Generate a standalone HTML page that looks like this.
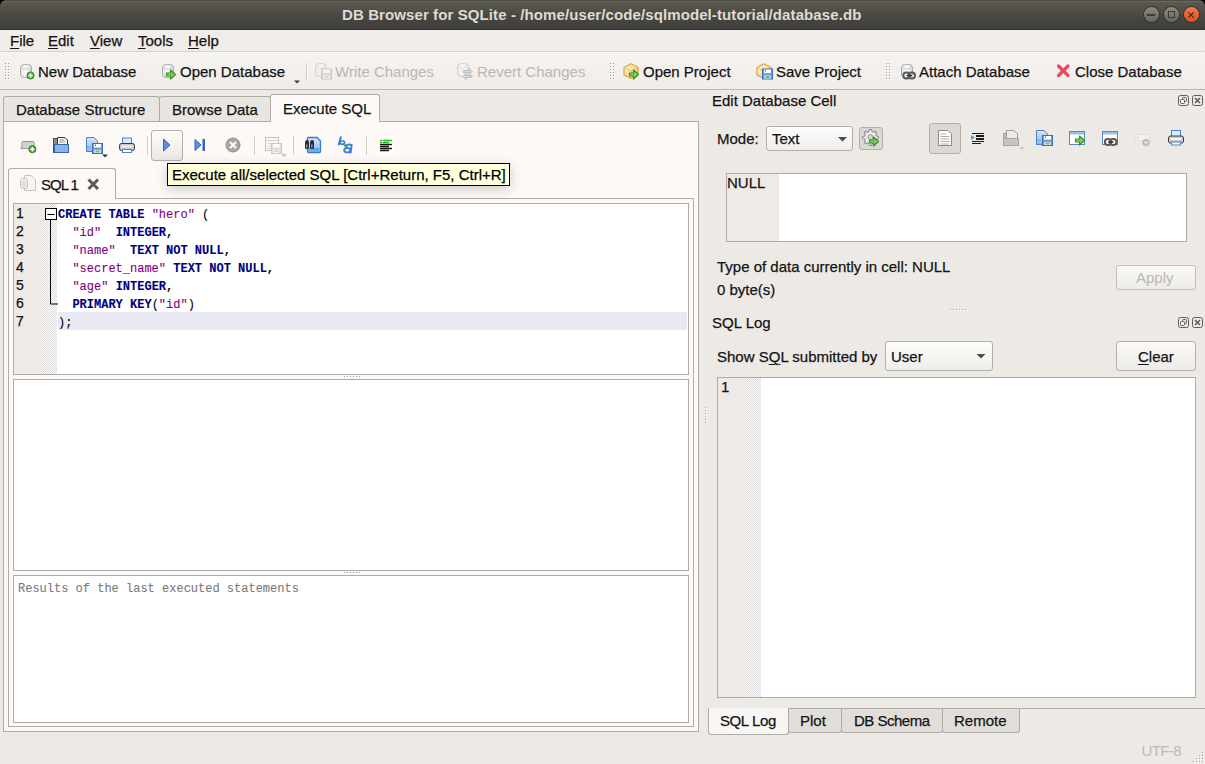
<!DOCTYPE html>
<html><head><meta charset="utf-8">
<style>
*{box-sizing:border-box;margin:0;padding:0}
html,body{width:1205px;height:764px;overflow:hidden;background:#000}
body{position:relative;font-family:"Liberation Sans",sans-serif;font-size:15px;color:#3c3c3c}
.a{position:absolute}
.t{position:absolute;white-space:pre;line-height:15px;font-size:15px;font-family:"Liberation Sans",sans-serif;color:#141414;-webkit-text-stroke:0.25px currentColor}
.u{text-decoration:underline;text-underline-offset:2px;text-decoration-thickness:1px}
.dis{color:#bab7b2;-webkit-text-stroke:0}
.mono{font-family:"Liberation Mono",monospace;font-size:12px;line-height:18px;-webkit-text-stroke:0.1px currentColor}
.kw{color:#00007f;font-weight:bold}
.st{color:#7f007f}
.op{color:#000;font-weight:bold}
.box{position:absolute;border:1px solid #ada9a4}
.tab{position:absolute;border:1px solid #afaba6;border-bottom:none;border-radius:3px 3px 0 0;background:#e9e6e2}
.btn{position:absolute;border:1px solid #b3afaa;border-radius:3px;background:linear-gradient(#fbfaf9,#eeebe8)}
.handle{position:absolute;width:4px;background-image:radial-gradient(circle,#b9b5b0 0.7px,transparent 0.8px);background-size:3px 3px}
.sep{position:absolute;width:2px;background:#cfcbc6;border-right:1px solid #fdfcfb}
</style></head>
<body>
<!-- window background -->
<div class="a" style="left:0;top:0;width:1205px;height:764px;background:#edeae6"></div>

<!-- title bar -->
<div class="a" style="left:0;top:0;width:1205px;height:30px;background:#000"></div>
<div class="a" style="left:0;top:0;width:1205px;height:30px;border-radius:6px 6px 0 0;background:linear-gradient(#4e4c45 0px,#4e4c45 1px,#6a675d 1px,#6a675d 2px,#5c5950 2px,#4a4843 16px,#3e3d39 29px,#343330 29px)"></div>
<div class="t" style="left:342px;top:7px;font-weight:bold;color:#dfdbd2;letter-spacing:0.1px;-webkit-text-stroke:0">DB Browser for SQLite - /home/user/code/sqlmodel-tutorial/database.db</div>
<!-- window buttons -->
<div class="a" style="left:1143.5px;top:7.2px;width:15px;height:15px;border-radius:50%;background:linear-gradient(#8c8982,#67655f);box-shadow:0 0 0 1px #33322e"></div>
<div class="a" style="left:1147px;top:14px;width:8px;height:1.5px;background:#3a3935"></div>
<div class="a" style="left:1163.5px;top:7.2px;width:15px;height:15px;border-radius:50%;background:linear-gradient(#8c8982,#67655f);box-shadow:0 0 0 1px #33322e"></div>
<div class="a" style="left:1167.5px;top:11px;width:7px;height:7px;border:1.3px solid #3a3935"></div>
<div class="a" style="left:1183.5px;top:7.2px;width:15px;height:15px;border-radius:50%;background:linear-gradient(#f47a4e,#e0501e);box-shadow:0 0 0 1px #33322e"></div>
<svg class="a" style="left:1182px;top:6px" width="18" height="18"><path d="M6.3 6.3L11.7 11.7M11.7 6.3L6.3 11.7" stroke="#2a2a20" stroke-width="1.1"/></svg>

<!-- menu bar -->
<div class="a" style="left:0;top:30px;width:1205px;height:22px;background:#efece9"></div>
<div class="t" style="left:10px;top:33px"><span class="u">F</span>ile</div>
<div class="t" style="left:48px;top:33px"><span class="u">E</span>dit</div>
<div class="t" style="left:90px;top:33px"><span class="u">V</span>iew</div>
<div class="t" style="left:138px;top:33px"><span class="u">T</span>ools</div>
<div class="t" style="left:188px;top:33px"><span class="u">H</span>elp</div>

<!-- main toolbar -->
<div class="a" style="left:0;top:51px;width:1205px;height:38px;background:linear-gradient(#f6f4f1,#efece9)"></div>
<div class="a" style="left:0;top:50.5px;width:1205px;height:1px;background:#d6d2cd"></div>
<div class="a" style="left:0;top:89px;width:1205px;height:1px;background:#bab6b1"></div>
<div class="t" style="left:38px;top:64px">New Database</div>
<div class="t" style="left:180px;top:64px">Open Database</div>
<div class="t dis" style="left:335px;top:64px">Write Changes</div>
<div class="t dis" style="left:477px;top:64px">Revert Changes</div>
<div class="t" style="left:643px;top:64px">Open Project</div>
<div class="t" style="left:776px;top:64px">Save Project</div>
<div class="t" style="left:919px;top:64px">Attach Database</div>
<div class="t" style="left:1075px;top:64px">Close Database</div>
<div class="sep" style="left:306px;top:63px;height:18px"></div>

<!-- ICONS_TOOLBAR -->

<!-- main tabs -->
<div class="tab" style="left:3px;top:96px;width:157px;height:25px"></div>
<div class="tab" style="left:159px;top:96px;width:112px;height:25px"></div>
<div class="a" style="left:3px;top:121px;width:696px;height:611px;border:1px solid #afaba6;background:#fcf9f6"></div>
<div class="tab" style="left:270px;top:94px;width:110px;height:28px;background:#fcf9f6"></div>
<div class="t" style="left:16px;top:102px">Database Structure</div>
<div class="t" style="left:172px;top:102px">Browse Data</div>
<div class="t" style="left:283px;top:101px">Execute SQL</div>

<!-- SQL toolbar -->
<div class="btn" style="left:151px;top:130px;width:32px;height:31px;background:linear-gradient(#fdfcfb,#f3f1ee 60%,#e9e6e2)"></div>
<div class="sep" style="left:147px;top:136px;height:19px"></div>
<div class="sep" style="left:254px;top:136px;height:19px"></div>
<div class="sep" style="left:293px;top:136px;height:19px"></div>
<div class="sep" style="left:366px;top:136px;height:19px"></div>
<!-- ICONS_SQL -->

<!-- SQL tab -->
<div class="a" style="left:8px;top:198px;width:686px;height:529px;border:1px solid #afaba6;background:#fcf9f6"></div>
<div class="tab" style="left:8px;top:168px;width:108px;height:31px;background:#fcf9f6"></div>
<div class="t" style="left:41px;top:177px;letter-spacing:-1px">SQL</div><div class="t" style="left:70.5px;top:177px">1</div>

<!-- editor -->
<div class="a" style="left:13px;top:203px;width:676px;height:172px;border:1px solid #afaba6;background:#fff;overflow:hidden">
  <div class="a" style="left:0;top:0;width:29px;height:170px;background:#eeebe7"></div>
  <div class="a" style="left:29px;top:0;width:14px;height:170px;background:repeating-conic-gradient(#d9d9d9 0 25%,#fff 0 50%) 0 0/2px 2px"></div>
  <div class="a" style="left:44px;top:108px;width:629px;height:18px;background:#e9e9f3"></div>
</div>
<div class="a" style="left:16px;top:204px;width:26px">
  <div class="t" style="position:relative;line-height:18px;font-size:14px;color:#111;margin-top:-0.5px">1
2
3
4
5
6
7</div>
</div>
<svg class="a" style="left:44px;top:207px" width="14" height="100">
  <rect x="1.5" y="1.5" width="11" height="11" fill="#fff" stroke="#000" stroke-width="1"/>
  <path d="M3.5 7.5H10.5" stroke="#000" stroke-width="1"/>
  <path d="M6.5 13V97H14" stroke="#000" stroke-width="1" fill="none"/>
</svg>
<div class="t mono" style="left:58px;top:205.8px;color:#000"><span class="kw">CREATE TABLE</span> <span class="st">"hero"</span> (
  <span class="st">"id"</span>  <span class="kw">INTEGER</span><span class="op">,</span>
  <span class="st">"name"</span>  <span class="kw">TEXT NOT NULL</span><span class="op">,</span>
  <span class="st">"secret_name"</span> <span class="kw">TEXT NOT NULL</span><span class="op">,</span>
  <span class="st">"age"</span> <span class="kw">INTEGER</span><span class="op">,</span>
  <span class="kw">PRIMARY KEY</span>(<span class="st">"id"</span>)
);</div>

<!-- middle frame -->
<div class="a" style="left:13px;top:379px;width:676px;height:192px;border:1px solid #afaba6;background:#fff"></div>
<!-- results frame -->
<div class="a" style="left:13px;top:575px;width:676px;height:148px;border:1px solid #afaba6;background:#fff"></div>
<div class="t mono" style="left:18px;top:580px;color:#7a7a7a">Results of the last executed statements</div>

<!-- tooltip -->
<div class="a" style="left:167px;top:163px;width:343px;height:23px;border:1px solid #000;background:#ffffdc;box-shadow:0 3px 12px rgba(0,0,0,0.2)"></div>
<div class="t" style="left:172px;top:167px;color:#000">Execute all/selected SQL [Ctrl+Return, F5, Ctrl+R]</div>

<!-- RIGHT DOCK -->
<div class="t" style="left:712px;top:93px">Edit Database Cell</div>
<div class="t" style="left:717px;top:131px">Mode:</div>
<div class="btn" style="left:766px;top:126px;width:87px;height:25px;background:linear-gradient(#fdfdfc,#f0eeeb)"></div>
<div class="t" style="left:772px;top:131px">Text</div>
<div class="btn" style="left:859px;top:127px;width:24px;height:23px;background:#dcd9d5"></div>
<div class="btn" style="left:929px;top:123px;width:32px;height:31px;background:#dcd9d5"></div>
<div class="a" style="left:726px;top:173px;width:461px;height:69px;border:1px solid #afaba6;background:#fff"></div>
<div class="a" style="left:727px;top:174px;width:52px;height:67px;background:#eeebe7"></div>
<div class="t" style="left:727px;top:175px">NULL</div>
<div class="t" style="left:717px;top:259px">Type of data currently in cell: NULL</div>
<div class="t" style="left:717px;top:282px">0 byte(s)</div>
<div class="btn" style="left:1116px;top:265px;width:80px;height:25px;border-color:#c2beb9"></div>
<div class="t dis" style="left:1136px;top:270px">Apply</div>

<div class="t" style="left:712px;top:315px">SQL Log</div>
<div class="t" style="left:717px;top:349px">Show S<span class="u">Q</span>L submitted by</div>
<div class="btn" style="left:885px;top:341px;width:108px;height:30px;background:linear-gradient(#fdfdfc,#f0eeeb)"></div>
<div class="t" style="left:891px;top:349px">User</div>
<div class="btn" style="left:1116px;top:341px;width:80px;height:30px"></div>
<div class="t" style="left:1138px;top:349px"><span class="u">C</span>lear</div>
<div class="a" style="left:717px;top:377px;width:479px;height:321px;border:1px solid #afaba6;background:#fff"></div>
<div class="a" style="left:718px;top:378px;width:29px;height:319px;background:#eeebe7"></div>
<div class="a" style="left:747px;top:378px;width:14px;height:319px;background:repeating-conic-gradient(#d9d9d9 0 25%,#fff 0 50%) 0 0/2px 2px"></div>
<div class="t" style="left:721px;top:379px">1</div>

<!-- bottom tabs -->
<div class="a" style="left:708px;top:708px;width:497px;height:1px;background:#afaba6"></div>
<div class="tab" style="left:788px;top:709px;width:54px;height:24px;border-top:none;border-bottom:1px solid #afaba6;border-radius:0 0 3px 3px;background:#e1ded9"></div>
<div class="tab" style="left:841px;top:709px;width:102px;height:24px;border-top:none;border-bottom:1px solid #afaba6;border-radius:0 0 3px 3px;background:#e1ded9"></div>
<div class="tab" style="left:942px;top:709px;width:78px;height:24px;border-top:none;border-bottom:1px solid #afaba6;border-radius:0 0 3px 3px;background:#e1ded9"></div>
<div class="tab" style="left:708px;top:708px;width:81px;height:27px;border-top:none;border-bottom:1px solid #afaba6;border-radius:0 0 3px 3px;background:#f7f6f4"></div>
<div class="t" style="left:720px;top:713px;letter-spacing:-0.4px">SQL Log</div>
<div class="t" style="left:800px;top:713px">Plot</div>
<div class="t" style="left:854px;top:713px;letter-spacing:-0.5px">DB Schema</div>
<div class="t" style="left:954px;top:713px">Remote</div>

<div class="t dis" style="left:1141.5px;top:743px;color:#bcb9b4;letter-spacing:-0.6px;-webkit-text-stroke:0">UTF-8</div>
<svg class="a" style="left:0;top:0;pointer-events:none" width="1205" height="764" viewBox="0 0 1205 764">
<defs>
  <linearGradient id="gdb" x1="0" y1="0" x2="1" y2="0"><stop offset="0" stop-color="#e4e4e4"/><stop offset="0.5" stop-color="#fbfbfb"/><stop offset="1" stop-color="#d6d6d6"/></linearGradient>
  <linearGradient id="gbox" x1="0" y1="0" x2="1" y2="1"><stop offset="0" stop-color="#fff6dc"/><stop offset="1" stop-color="#f5c86a"/></linearGradient>
  <linearGradient id="gblue" x1="0" y1="0" x2="0" y2="1"><stop offset="0" stop-color="#d8e6f8"/><stop offset="1" stop-color="#8fb4e4"/></linearGradient>
  <g id="db"><rect x="0.5" y="0.5" width="11" height="13" rx="4" ry="3" fill="url(#gdb)" stroke="#a9a9a9"/><path d="M1.5 4Q6 6.5 10.5 4" stroke="#cdcdcd" fill="none"/></g>
  <g id="garrow"><path d="M0.5 3.5H4.5V0.5L9.5 5L4.5 9.5V6.5H0.5Z" fill="#8cc46e" stroke="#2f9a1e" stroke-width="1.2" stroke-linejoin="round"/></g>
  <g id="floppyB"><rect x="0.5" y="0.5" width="10" height="10" fill="#6f9de0" stroke="#3c6cc0"/><rect x="2" y="1" width="7" height="3.5" fill="#fff"/><rect x="2.5" y="7" width="6" height="3" fill="#fff"/><rect x="3.5" y="7.5" width="4" height="2" fill="#6cc043"/><rect x="3" y="1.5" width="1" height="1.5" fill="#3c6cc0"/></g>
  <g id="floppyG"><rect x="0.5" y="0.5" width="10" height="10" fill="#c4c4c4" stroke="#9a9a9a"/><rect x="2" y="1" width="7" height="3.5" fill="#fafafa"/><rect x="2.5" y="7" width="6" height="3" fill="#fafafa"/><rect x="3.5" y="7.5" width="4" height="1.5" fill="#a8a8a8"/></g>
  <g id="hexbox"><path d="M8 0.8L15 4.5V12L8 15.5L1 12V4.5Z" fill="url(#gbox)" stroke="#d9a63a" stroke-width="1.2" stroke-linejoin="round"/><path d="M1.5 4.8L8 8.2L14.5 4.8M8 8.2V15" stroke="#e8bb58" stroke-width="0.9" fill="none"/></g>
  <g id="printer"><rect x="3.5" y="0.5" width="9" height="7" fill="#dce9f8" stroke="#4a86d8"/><rect x="0.5" y="6" width="15" height="7" rx="2" fill="#c8c8c8" stroke="#3a3a3a"/><rect x="2.5" y="8" width="11" height="2" fill="#f4f4f4"/><rect x="3.5" y="12" width="9" height="3" fill="#fff" stroke="#4a86d8"/></g>
  <g id="docblue"><path d="M0.5 0.5H8L11.5 4V14.5H0.5Z" fill="url(#gblue)" stroke="#4a80cc"/></g>
  <g id="win"><rect x="0.5" y="0.5" width="15" height="13" fill="#fff" stroke="#5588cc"/><rect x="1" y="1" width="14" height="2.5" fill="#9ebfe8"/></g>
  <g id="chain"><rect x="0.8" y="1" width="6.5" height="6" rx="3" fill="none" stroke="#5a5a5a" stroke-width="2"/><rect x="6" y="1" width="6.5" height="6" rx="3" fill="none" stroke="#5a5a5a" stroke-width="2"/><path d="M4 4H9.5" stroke="#333" stroke-width="1.5"/></g>
</defs>

<!-- main toolbar icons -->
<rect x="5" y="63" width="1" height="1" fill="#a09d99"/><rect x="6" y="64" width="1" height="1" fill="#fff"/><rect x="5" y="66" width="1" height="1" fill="#a09d99"/><rect x="6" y="67" width="1" height="1" fill="#fff"/><rect x="5" y="69" width="1" height="1" fill="#a09d99"/><rect x="6" y="70" width="1" height="1" fill="#fff"/><rect x="5" y="72" width="1" height="1" fill="#a09d99"/><rect x="6" y="73" width="1" height="1" fill="#fff"/><rect x="5" y="75" width="1" height="1" fill="#a09d99"/><rect x="6" y="76" width="1" height="1" fill="#fff"/><rect x="5" y="78" width="1" height="1" fill="#a09d99"/><rect x="6" y="79" width="1" height="1" fill="#fff"/><rect x="8" y="63" width="1" height="1" fill="#a09d99"/><rect x="9" y="64" width="1" height="1" fill="#fff"/><rect x="8" y="66" width="1" height="1" fill="#a09d99"/><rect x="9" y="67" width="1" height="1" fill="#fff"/><rect x="8" y="69" width="1" height="1" fill="#a09d99"/><rect x="9" y="70" width="1" height="1" fill="#fff"/><rect x="8" y="72" width="1" height="1" fill="#a09d99"/><rect x="9" y="73" width="1" height="1" fill="#fff"/><rect x="8" y="75" width="1" height="1" fill="#a09d99"/><rect x="9" y="76" width="1" height="1" fill="#fff"/><rect x="8" y="78" width="1" height="1" fill="#a09d99"/><rect x="9" y="79" width="1" height="1" fill="#fff"/><rect x="610" y="63" width="1" height="1" fill="#a09d99"/><rect x="611" y="64" width="1" height="1" fill="#fff"/><rect x="610" y="66" width="1" height="1" fill="#a09d99"/><rect x="611" y="67" width="1" height="1" fill="#fff"/><rect x="610" y="69" width="1" height="1" fill="#a09d99"/><rect x="611" y="70" width="1" height="1" fill="#fff"/><rect x="610" y="72" width="1" height="1" fill="#a09d99"/><rect x="611" y="73" width="1" height="1" fill="#fff"/><rect x="610" y="75" width="1" height="1" fill="#a09d99"/><rect x="611" y="76" width="1" height="1" fill="#fff"/><rect x="610" y="78" width="1" height="1" fill="#a09d99"/><rect x="611" y="79" width="1" height="1" fill="#fff"/><rect x="613" y="63" width="1" height="1" fill="#a09d99"/><rect x="614" y="64" width="1" height="1" fill="#fff"/><rect x="613" y="66" width="1" height="1" fill="#a09d99"/><rect x="614" y="67" width="1" height="1" fill="#fff"/><rect x="613" y="69" width="1" height="1" fill="#a09d99"/><rect x="614" y="70" width="1" height="1" fill="#fff"/><rect x="613" y="72" width="1" height="1" fill="#a09d99"/><rect x="614" y="73" width="1" height="1" fill="#fff"/><rect x="613" y="75" width="1" height="1" fill="#a09d99"/><rect x="614" y="76" width="1" height="1" fill="#fff"/><rect x="613" y="78" width="1" height="1" fill="#a09d99"/><rect x="614" y="79" width="1" height="1" fill="#fff"/><rect x="886" y="63" width="1" height="1" fill="#a09d99"/><rect x="887" y="64" width="1" height="1" fill="#fff"/><rect x="886" y="66" width="1" height="1" fill="#a09d99"/><rect x="887" y="67" width="1" height="1" fill="#fff"/><rect x="886" y="69" width="1" height="1" fill="#a09d99"/><rect x="887" y="70" width="1" height="1" fill="#fff"/><rect x="886" y="72" width="1" height="1" fill="#a09d99"/><rect x="887" y="73" width="1" height="1" fill="#fff"/><rect x="886" y="75" width="1" height="1" fill="#a09d99"/><rect x="887" y="76" width="1" height="1" fill="#fff"/><rect x="886" y="78" width="1" height="1" fill="#a09d99"/><rect x="887" y="79" width="1" height="1" fill="#fff"/><rect x="889" y="63" width="1" height="1" fill="#a09d99"/><rect x="890" y="64" width="1" height="1" fill="#fff"/><rect x="889" y="66" width="1" height="1" fill="#a09d99"/><rect x="890" y="67" width="1" height="1" fill="#fff"/><rect x="889" y="69" width="1" height="1" fill="#a09d99"/><rect x="890" y="70" width="1" height="1" fill="#fff"/><rect x="889" y="72" width="1" height="1" fill="#a09d99"/><rect x="890" y="73" width="1" height="1" fill="#fff"/><rect x="889" y="75" width="1" height="1" fill="#a09d99"/><rect x="890" y="76" width="1" height="1" fill="#fff"/><rect x="889" y="78" width="1" height="1" fill="#a09d99"/><rect x="890" y="79" width="1" height="1" fill="#fff"/>
<path d="M294 80.5H300L297 83.5Z" fill="#3a3a3a"/>
<use href="#db" x="20" y="64"/>
<circle cx="30.5" cy="75.5" r="3.6" fill="#4fa23a" stroke="#2f7f1e" stroke-width="0.8"/>
<path d="M30.5 73.3V77.7M28.3 75.5H32.7" stroke="#fff" stroke-width="1.5"/>

<use href="#db" x="162" y="64"/>
<use href="#garrow" x="166" y="69.5"/>

<g opacity="0.45"><use href="#db" x="315" y="63"/><use href="#floppyG" x="321" y="68.5"/></g>

<g opacity="0.45"><use href="#db" x="457" y="63"/>
<path d="M463 70.5H469V68.5L472.5 71.5L469 74.5V72.5H463Z" fill="#bbb" stroke="#777" stroke-width="0.8"/>
<path d="M472 75.5H466V73.5L462.5 76.5L466 79.5V77.5H472Z" fill="#bbb" stroke="#777" stroke-width="0.8"/></g>

<use href="#hexbox" x="623" y="63"/>
<use href="#garrow" x="629" y="69.5"/>

<use href="#hexbox" x="756" y="63"/>
<use href="#floppyB" x="762" y="68.5"/>

<use href="#db" x="901" y="64"/>
<use href="#chain" x="902.5" y="71.5"/>

<path d="M1058.5 66L1068 75.5M1068 66L1058.5 75.5" stroke="#f0475c" stroke-width="3.2" stroke-linecap="round"/>

<!-- SQL toolbar icons -->
<path d="M21 147.5H22V142.5Q22 141.5 23 141.5H33Q34 141.5 34 142.5V147.5H35" fill="#cfcfcf" stroke="#8e8e8e"/>
<rect x="22.5" y="142" width="11" height="5.5" fill="#d0d0d0"/>
<path d="M20.5 148.5H33" stroke="#9a9a9a"/>
<circle cx="32.4" cy="149.2" r="3.6" fill="#4fa23a" stroke="#2f7f1e" stroke-width="0.8"/>
<path d="M32.4 147V151.4M30.2 149.2H34.6" stroke="#fff" stroke-width="1.5"/>

<rect x="53.5" y="138.5" width="4" height="14" fill="#8a8a8a" stroke="#505050"/>
<path d="M57.5 137.5H65L67.5 140V147H57.5Z" fill="#f2f2f2" stroke="#3a3a3a"/>
<path d="M59.5 140H64M59.5 142H65" stroke="#999"/>
<rect x="54.5" y="144.5" width="14" height="8" fill="#8fb2e0" stroke="#3366b3"/>

<use href="#docblue" x="86" y="137"/>
<path d="M87 147H91" stroke="#5ab0f0" stroke-width="1"/>
<use href="#floppyB" x="92" y="143"/>
<path d="M102 154.5H108L105 157.5Z" fill="#3a3a3a"/>

<use href="#printer" x="119" y="137.5"/>

<path d="M163.5 139V151L170 145Z" fill="#5a8ee0" stroke="#2f66c8" stroke-width="1" stroke-linejoin="round"/>
<path d="M195 139.5V150.5L201 145Z" fill="#5a8ee0" stroke="#2f66c8" stroke-width="1" stroke-linejoin="round"/>
<rect x="202.5" y="139" width="2.5" height="12" fill="#2f66c8"/>

<circle cx="233" cy="145" r="7" fill="#a8a8a8" stroke="#8e8e8e"/>
<path d="M230 142L236 148M236 142L230 148" stroke="#fff" stroke-width="2"/>

<g opacity="0.5"><rect x="265.5" y="137.5" width="13" height="13" fill="#f6f6f6" stroke="#888"/>
<path d="M266 140.5H278M268 143.5H271M268 146H271M268 148.5H271" stroke="#aaa"/>
<use href="#floppyG" x="271" y="143"/></g>
<path d="M281 154H287L284 157Z" fill="#c8c8c8"/>

<path d="M307.5 138Q307.5 137.5 308.5 137.5H317L320.5 141V151.5Q320.5 152.5 319.5 152.5H308.5Q307.5 152.5 307.5 151.5Z" fill="url(#gblue)" stroke="#3f78d0" stroke-width="1.3"/>
<rect x="309" y="148" width="10" height="2.5" fill="#4aa8f0"/>
<path d="M305 148.8V143Q305 140 307 140Q309 140 309 143V148.8Z" fill="#2a2d33"/>
<path d="M310 148.8V143Q310 140 312 140Q314 140 314 143V148.8Z" fill="#2a2d33"/>
<rect x="306" y="144.5" width="1.5" height="3" fill="#8a96a8"/><rect x="311" y="144.5" width="1.5" height="3" fill="#8a96a8"/>

<path d="M340.8 137.3L338.8 144.6" stroke="#3a7fe0" stroke-width="2" stroke-linecap="round"/>
<ellipse cx="342.4" cy="142.6" rx="2.2" ry="1.9" fill="none" stroke="#3a7fe0" stroke-width="1.6"/>
<path d="M345.3 145.8Q348.5 143.6 351.6 145L350.6 152.6" fill="none" stroke="#3a7fe0" stroke-width="2" stroke-linecap="round"/>
<ellipse cx="347.2" cy="150.2" rx="3" ry="2.2" fill="none" stroke="#3a7fe0" stroke-width="1.8"/>
<path d="M342.3 143.5L346 146" stroke="#3c9a3c" stroke-width="1.5"/><path d="M344.3 147L347.6 147.2L346.9 144.2Z" fill="#3c9a3c"/>

<rect x="378" y="137" width="16" height="16" fill="#fff"/>
<path d="M380.5 140.5H381.5M383.5 140.5H391.5M380.5 142.5H381.5M383.5 142.5H388.5" stroke="#22c022" stroke-width="1.4" stroke-linecap="round"/>
<path d="M380.5 144.5H391.5M380.5 146.5H388.5M380.5 148.5H391.5M380.5 150.5H388.5" stroke="#151515" stroke-width="1.3" stroke-linecap="round"/>

<!-- SQL 1 tab -->
<g opacity="0.55"><path d="M24.5 175.5H31L35.5 180V190.5H24.5Z" fill="#f4f4f4" stroke="#9a9a9a"/>
<rect x="20.5" y="178.5" width="7" height="10" rx="2" fill="#e8e8e8" stroke="#9a9a9a"/>
<path d="M23 181V187M25 181V187" stroke="#aaa"/></g>
<path d="M88.5 179.5L98 189M98 179.5L88.5 189" stroke="#5c5c5c" stroke-width="3"/>

<!-- right dock -->
<rect x="1178.5" y="95.5" width="10" height="10" rx="2" fill="none" stroke="#5f5d58"/>
<rect x="1182.5" y="97.5" width="4" height="4" rx="1" fill="none" stroke="#5f5d58"/>
<rect x="1180.5" y="99.5" width="4" height="4" rx="1" fill="#f6f4f2" stroke="#5f5d58"/>
<rect x="1192.5" y="95.5" width="10" height="10" rx="2" fill="none" stroke="#5f5d58"/>
<path d="M1195 98L1200 103M1200 98L1195 103" stroke="#5f5d58" stroke-width="1.6"/>

<rect x="1178.5" y="317.5" width="10" height="10" rx="2" fill="none" stroke="#5f5d58"/>
<rect x="1182.5" y="319.5" width="4" height="4" rx="1" fill="none" stroke="#5f5d58"/>
<rect x="1180.5" y="321.5" width="4" height="4" rx="1" fill="#f6f4f2" stroke="#5f5d58"/>
<rect x="1192.5" y="317.5" width="10" height="10" rx="2" fill="none" stroke="#5f5d58"/>
<path d="M1195 320L1200 325M1200 320L1195 325" stroke="#5f5d58" stroke-width="1.6"/>

<path d="M838 137H847L842.5 141.5Z" fill="#4a4a4a"/>
<path d="M976.5 354H985.5L981 358.5Z" fill="#4a4a4a"/>

<!-- gear -->
<g transform="translate(870.5 137.5)">
<path d="M-1.3 -7.2H1.3L1.8 -4.9L3.9 -4L5.7 -5.3L7.3 -3.6L6 -1.8L6.9 0.3L9.1 0.8V3.3L6.9 3.8L6 5.9L7.3 7.7L5.6 9.4L3.8 8.1L1.8 9L1.3 11.2H-1.3L-1.8 9L-3.9 8.1L-5.7 9.4L-7.3 7.7L-6 5.9L-6.9 3.8L-9.1 3.3V0.8L-6.9 0.3L-6 -1.8L-7.3 -3.6L-5.6 -5.3L-3.8 -4L-1.8 -4.9Z" transform="translate(0 -1.7) scale(0.86)" fill="#eeeeee" stroke="#8c8c8c" stroke-width="1.2"/>
<circle cx="0" cy="-0.4" r="2.5" fill="#dcd9d5" stroke="#8c8c8c" stroke-width="0.9"/>
</g>
<use href="#garrow" x="869" y="136.5"/>
<!-- doc toggle -->
<path d="M938.5 130.5H948L951.5 134V145.5H938.5Z" fill="#fff" stroke="#8a8a8a"/>
<path d="M940.5 134H946M940.5 136.5H949.5M940.5 139H949.5M940.5 141.5H949.5M940.5 144H949.5" stroke="#b0b0b0"/>

<!-- word wrap -->
<path d="M972 133.5H984M972 141.5H984M972 143.5H981" stroke="#1a1a1a" stroke-width="1"/>
<path d="M976 136H984M976 139H984" stroke="#1a1a1a" stroke-width="2"/>
<path d="M971 135L975 137.5L971 140Z" fill="#5a9ae8"/>
<!-- import disabled -->
<g opacity="0.45"><rect x="1003.5" y="133.5" width="3" height="11" fill="#8a8a8a" stroke="#555"/>
<path d="M1006.5 130.5H1014L1017.5 134V140H1006.5Z" fill="#eee" stroke="#444"/>
<rect x="1003.5" y="138.5" width="15" height="7" fill="#999" stroke="#555"/></g>
<path d="M1019 147H1025L1022 150Z" fill="#c8c8c8"/>

<use href="#docblue" x="1036" y="130"/>
<path d="M1037 140H1041" stroke="#5ab0f0"/>
<use href="#floppyB" x="1042" y="135"/>

<use href="#win" x="1069" y="131"/>
<use href="#garrow" x="1075" y="135.5"/>

<use href="#win" x="1102" y="131"/>
<use href="#chain" x="1104" y="138"/>

<g opacity="0.6"><rect x="1135.5" y="134.5" width="14" height="6" fill="#fcf9f6" stroke="#ddd"/>
<path d="M1137.5 136V139" stroke="#bbb"/>
<circle cx="1146" cy="142.5" r="3.3" fill="#aaa" stroke="#888" stroke-width="0.8"/>
<path d="M1144.3 142.5H1147.7" stroke="#fff" stroke-width="1.2"/></g>

<use href="#printer" x="1168" y="130"/>

<!-- splitter dots -->
<g shape-rendering="crispEdges"><rect x="345" y="377" width="1" height="1" fill="#fff"/><rect x="344" y="376" width="1" height="1" fill="#a3a09c"/><rect x="345" y="573" width="1" height="1" fill="#fff"/><rect x="344" y="572" width="1" height="1" fill="#a3a09c"/><rect x="348" y="377" width="1" height="1" fill="#fff"/><rect x="347" y="376" width="1" height="1" fill="#a3a09c"/><rect x="348" y="573" width="1" height="1" fill="#fff"/><rect x="347" y="572" width="1" height="1" fill="#a3a09c"/><rect x="351" y="377" width="1" height="1" fill="#fff"/><rect x="350" y="376" width="1" height="1" fill="#a3a09c"/><rect x="351" y="573" width="1" height="1" fill="#fff"/><rect x="350" y="572" width="1" height="1" fill="#a3a09c"/><rect x="354" y="377" width="1" height="1" fill="#fff"/><rect x="353" y="376" width="1" height="1" fill="#a3a09c"/><rect x="354" y="573" width="1" height="1" fill="#fff"/><rect x="353" y="572" width="1" height="1" fill="#a3a09c"/><rect x="357" y="377" width="1" height="1" fill="#fff"/><rect x="356" y="376" width="1" height="1" fill="#a3a09c"/><rect x="357" y="573" width="1" height="1" fill="#fff"/><rect x="356" y="572" width="1" height="1" fill="#a3a09c"/><rect x="360" y="377" width="1" height="1" fill="#fff"/><rect x="359" y="376" width="1" height="1" fill="#a3a09c"/><rect x="360" y="573" width="1" height="1" fill="#fff"/><rect x="359" y="572" width="1" height="1" fill="#a3a09c"/><rect x="951" y="310" width="1" height="1" fill="#fff"/><rect x="950" y="309" width="1" height="1" fill="#a3a09c"/><rect x="954" y="310" width="1" height="1" fill="#fff"/><rect x="953" y="309" width="1" height="1" fill="#a3a09c"/><rect x="957" y="310" width="1" height="1" fill="#fff"/><rect x="956" y="309" width="1" height="1" fill="#a3a09c"/><rect x="960" y="310" width="1" height="1" fill="#fff"/><rect x="959" y="309" width="1" height="1" fill="#a3a09c"/><rect x="963" y="310" width="1" height="1" fill="#fff"/><rect x="962" y="309" width="1" height="1" fill="#a3a09c"/><rect x="966" y="310" width="1" height="1" fill="#fff"/><rect x="965" y="309" width="1" height="1" fill="#a3a09c"/><rect x="706" y="408" width="1" height="1" fill="#fff"/><rect x="705" y="407" width="1" height="1" fill="#a3a09c"/><rect x="706" y="411" width="1" height="1" fill="#fff"/><rect x="705" y="410" width="1" height="1" fill="#a3a09c"/><rect x="706" y="414" width="1" height="1" fill="#fff"/><rect x="705" y="413" width="1" height="1" fill="#a3a09c"/><rect x="706" y="417" width="1" height="1" fill="#fff"/><rect x="705" y="416" width="1" height="1" fill="#a3a09c"/><rect x="706" y="420" width="1" height="1" fill="#fff"/><rect x="705" y="419" width="1" height="1" fill="#a3a09c"/><rect x="706" y="423" width="1" height="1" fill="#fff"/><rect x="705" y="422" width="1" height="1" fill="#a3a09c"/><rect x="1203" y="753" width="1" height="1" fill="#fff"/><rect x="1202" y="752" width="1" height="1" fill="#a3a09c"/><rect x="1200" y="756" width="1" height="1" fill="#fff"/><rect x="1199" y="755" width="1" height="1" fill="#a3a09c"/><rect x="1203" y="756" width="1" height="1" fill="#fff"/><rect x="1202" y="755" width="1" height="1" fill="#a3a09c"/><rect x="1197" y="759" width="1" height="1" fill="#fff"/><rect x="1196" y="758" width="1" height="1" fill="#a3a09c"/><rect x="1200" y="759" width="1" height="1" fill="#fff"/><rect x="1199" y="758" width="1" height="1" fill="#a3a09c"/><rect x="1203" y="759" width="1" height="1" fill="#fff"/><rect x="1202" y="758" width="1" height="1" fill="#a3a09c"/><rect x="1194" y="762" width="1" height="1" fill="#fff"/><rect x="1193" y="761" width="1" height="1" fill="#a3a09c"/><rect x="1197" y="762" width="1" height="1" fill="#fff"/><rect x="1196" y="761" width="1" height="1" fill="#a3a09c"/><rect x="1200" y="762" width="1" height="1" fill="#fff"/><rect x="1199" y="761" width="1" height="1" fill="#a3a09c"/><rect x="1203" y="762" width="1" height="1" fill="#fff"/><rect x="1202" y="761" width="1" height="1" fill="#a3a09c"/></g>
</svg>

</body></html>
